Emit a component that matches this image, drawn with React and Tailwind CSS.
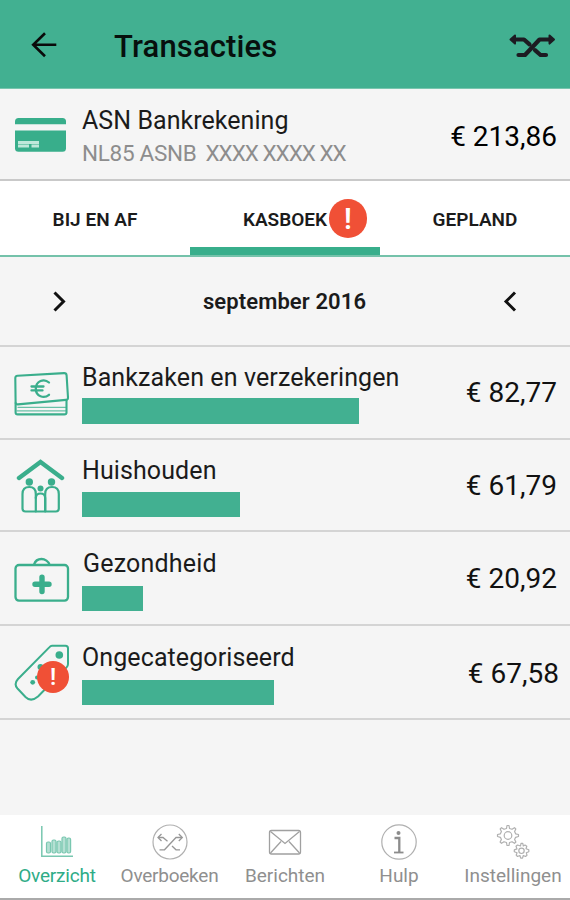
const GREEN = '#42b091';

function BackArrow() {
  return (
    <svg className="h-8 w-8" viewBox="28 28 32 32" fill="none" stroke="#0a0a0a" strokeWidth="2.6">
      <path d="M56.3 44.7H33M45 33.2L33.2 44.7L45 56.2" />
    </svg>
  );
}

function SwapIcon() {
  return (
    <svg className="h-8 w-12" viewBox="508 30 48 32" fill="none" stroke="#1d1b22" strokeWidth="4.2" strokeLinecap="round" strokeLinejoin="round">
      <path d="M514 39.5H524L529.5 44.3M535 50.2L540.5 55H546" />
      <path d="M518.5 55H525L539.5 39.5H550" />
      <path d="M515 35.4L510.5 39.5L515 43.6Z M549.5 35.4L554 39.5L549.5 43.6Z" fill="#1d1b22" strokeWidth="2" />
    </svg>
  );
}

function CardIcon() {
  return (
    <svg className="h-[34px] w-[52px]" viewBox="15 118 52 34" fill="#38ae8b">
      <path d="M15 124.3V121.5Q15 118 18.5 118H62.5Q66 118 66 121.5V124.3Z" />
      <path d="M15 130.5H66V148.3Q66 151.8 62.5 151.8H18.5Q15 151.8 15 148.3Z" />
      <path d="M18 142.5H39M18 146H29M31.5 146H39" stroke="#bfe8da" strokeWidth="2.8" />
    </svg>
  );
}

function BanknotesIcon() {
  return (
    <svg className="h-[46px] w-14" viewBox="14 371 56 46" fill="none" stroke="#3aae8c" strokeWidth="2.1" strokeLinejoin="round" strokeLinecap="round">
      <path d="M17.5 375.8L64 373.1Q66.4 373 66.6 375.4L68 397.5Q68.1 399.8 65.8 399.9L18 404.4Q15.7 404.6 15.6 402.3L15.3 378Q15.3 375.9 17.5 375.8Z" />
      <path d="M15.6 403V412.5Q15.6 414.4 17.7 414.4H64.3Q66.5 414.4 66.5 412.4V400.5" />
      <path d="M18 407.3H65.5M17 410.8H65.5" strokeWidth="1.2" opacity=".75" />
      <path d="M49 382.5C44 378 35.8 381 35.8 388.8C35.8 396.6 44 399 49 394.8M31.5 386.5H43.5M31.5 390.4H42.5" strokeWidth="2.3" />
    </svg>
  );
}

function HouseholdIcon() {
  return (
    <svg className="h-14 w-[50px]" viewBox="16 458 50 56" fill="none" stroke="#3aae8c" strokeLinejoin="round" strokeLinecap="round">
      <path d="M19 478L40.5 462L62 478" strokeWidth="4.4" strokeLinejoin="miter" />
      <g fill="#3aae8c" stroke="none">
        <circle cx="29.3" cy="482" r="3.7" />
        <circle cx="51.5" cy="482" r="3.7" />
        <circle cx="40.5" cy="488.5" r="3" />
      </g>
      <g strokeWidth="2.2">
        <path d="M35.8 511.5H25.5Q22.5 511.5 22.5 508.5V494Q22.5 487 29.3 487Q35.8 487 35.8 494Z" />
        <path d="M45.2 511.5H55.8Q58.8 511.5 58.8 508.5V494Q58.8 487 52 487Q45.2 487 45.2 494Z" />
        <path d="M35.8 498Q36 493.5 40.5 493.5Q45 493.5 45.2 498V511.5H35.8" />
      </g>
    </svg>
  );
}

function FirstAidIcon() {
  return (
    <svg className="h-[46px] w-14" viewBox="14 557 56 46" fill="none" stroke="#3aae8c" strokeWidth="2.3">
      <rect x="15.5" y="565" width="52.5" height="35.6" rx="3.5" />
      <path d="M34 564.5C35 561.5 38 559 41.5 559C45 559 48.5 561.5 49.5 564.5" />
      <path d="M42 577.3V591.5M35 584.3H49" strokeWidth="5.4" strokeLinecap="round" />
    </svg>
  );
}

function TagIcon() {
  return (
    <svg className="h-[58px] w-14" viewBox="14 644 56 58" fill="none" stroke="#3aae8c" strokeWidth="2" strokeLinejoin="round">
      <path d="M52 645.8H65.5Q68 645.8 68 648.3V664Q68 666 66.6 667.4L38 696.5Q31 702.5 25.5 697L17.5 688.5Q13.5 684 18 679L49.5 647.1Q50.6 645.9 52 645.8Z" />
      <g fill="#3aae8c" stroke="none">
        <circle cx="59.3" cy="655" r="3.8" />
        <circle cx="32.7" cy="682.3" r="2.4" />
        <circle cx="40.5" cy="667" r="3" />
        <circle cx="37" cy="677.5" r="2" />
      </g>
    </svg>
  );
}

function ChartIcon() {
  return (
    <svg className="h-9 w-9" viewBox="39 824 36 36" fill="none" stroke="#79c7b0" strokeWidth="1.5">
      <path d="M41.8 826V856.3H73" />
      <g fill="#b5e0d3" strokeWidth="1.2">
        <rect x="46.5" y="842" width="4" height="11" rx="1.5" />
        <rect x="52" y="840" width="4" height="13" rx="1.5" />
        <rect x="57" y="841" width="4" height="12" rx="1.5" />
        <rect x="62" y="837" width="4" height="16" rx="1.5" />
        <rect x="67" y="838" width="3.6" height="15" rx="1.5" />
      </g>
    </svg>
  );
}

function TransferIcon() {
  return (
    <svg className="h-9 w-9" viewBox="151.5 823.5 36 36" fill="none" stroke="#979797" strokeWidth="1.3">
      <circle cx="169.5" cy="841.5" r="17" stroke="#b0b0b0" strokeWidth="1.2" />
      <path d="M157.5 837H162.5L167 840.8M171.5 845.5L175.5 849.3H179.5" />
      <path d="M159 849.3H164L175.5 837H181.5" />
      <path d="M161 833.5L157.5 837L161 840.5M178.3 833.5L181.8 837L178.3 840.5" />
    </svg>
  );
}

function MailIcon() {
  return (
    <svg className="h-9 w-9" viewBox="267 824 36 36" fill="none" stroke="#a0a0a0" strokeWidth="1.3">
      <rect x="269.5" y="830.5" width="31" height="23.5" rx="2" />
      <path d="M270.5 831.5L285 843.5L299.5 831.5M270.5 853L281 841.5M299.5 853L289 841.5" />
    </svg>
  );
}

function InfoIcon() {
  return (
    <svg className="h-9 w-9" viewBox="381.5 823.5 36 36" fill="none" stroke="#8c8c8c">
      <circle cx="399.5" cy="841.5" r="17.2" stroke="#b0b0b0" strokeWidth="1.2" />
      <circle cx="399" cy="832.5" r="2" fill="#8c8c8c" stroke="none" />
      <path d="M395 837.5H399.8V851.5" strokeWidth="2.3" />
      <path d="M394.5 852H404" strokeWidth="1.8" />
    </svg>
  );
}

function GearsIcon() {
  return (
    <svg className="h-9 w-9" viewBox="495 824 36 36" fill="none" stroke="#b0b0b0" strokeWidth="1.2" strokeLinejoin="round">
      <path d="M506.5 828.5L507 825.5H509L509.5 828.5L512 829.3L514.5 827.7L515.8 829L514.6 831.5L515.6 833.8L518.5 834.5V836.5L515.6 837.3L514.6 839.5L515.9 842L514.5 843.3L512 841.7L509.5 842.5L509 845.5H507L506.5 842.5L504 841.7L501.5 843.3L500.1 842L501.4 839.5L500.4 837.3L497.5 836.5V834.5L500.4 833.8L501.4 831.5L500.2 829L501.5 827.7L504 829.3Z" />
      <circle cx="508" cy="835.5" r="3.8" />
      <path d="M520.5 846L521 843.3H522.8L523.3 846L525 845L526.8 846.2L526 848.7L528.8 849.8V851.8L526.3 852.7L527 855.3L525.5 856.5L523.3 855.5L522.5 858.2H520.7L519.9 855.5L517.5 856.5L516.2 855.2L517 852.7L514.3 851.8V849.9L517 848.9L516 846.3L517.5 845Z" />
      <circle cx="521.5" cy="850.8" r="2.7" />
    </svg>
  );
}

const rows = [
  { name: 'Bankzaken en verzekeringen', amount: '€ 82,77', Icon: BanknotesIcon, bar: 277, box: 'h-[93px]', iconPos: 'pt-[24px] pl-[14px]', textPos: 'pt-[15px]', barPos: 'mt-[4px] h-[26px]', right: 'pr-[13px] pt-[28px]' },
  { name: 'Huishouden', amount: '€ 61,79', Icon: HouseholdIcon, bar: 158, box: 'h-[92px]', iconPos: 'pt-[18px] pl-[16px]', textPos: 'pt-[15px]', barPos: 'mt-[5px] h-[25px]', right: 'pr-[13px] pt-[28px]' },
  { name: 'Gezondheid', amount: '€ 20,92', Icon: FirstAidIcon, bar: 61, box: 'h-[94px]', iconPos: 'pt-[25px] pl-[14px]', textPos: 'pt-[16px]', barPos: 'mt-[6px] h-[25px]', right: 'pr-[13px] pt-[29px]', shift: 'pl-px tracking-[0.200px]' },
  { name: 'Ongecategoriseerd', amount: '€ 67,58', Icon: TagIcon, bar: 192, box: 'h-[94px]', iconPos: 'pt-[18px] pl-[14px]', textPos: 'pt-[16px]', barPos: 'mt-[6px] h-[25px]', right: 'pr-[11px] pt-[30px]', alert: true },
];

const navItems = [
  { label: 'Overzicht', Icon: ChartIcon, width: 'w-[114px]', color: 'text-[#2fac87] tracking-[-0.200px]' },
  { label: 'Overboeken', Icon: TransferIcon, width: 'w-[111px]', color: 'text-[#8f8f8f] tracking-[-0.250px]' },
  { label: 'Berichten', Icon: MailIcon, width: 'w-[120px]', color: 'text-[#8f8f8f]' },
  { label: 'Hulp', Icon: InfoIcon, width: 'w-[108px]', color: 'text-[#8f8f8f]' },
  { label: 'Instellingen', Icon: GearsIcon, width: 'w-[120px]', color: 'text-[#8f8f8f]' },
];

export default function App() {
  return (
    <div className="flex h-[900px] w-[570px] flex-col overflow-hidden bg-[#f5f5f5] font-['Roboto',sans-serif] text-[#1b1b1b]">
      <header className="flex h-[89px] shrink-0 items-start border-b border-[#79c5ae] bg-[#42b091] pl-7">
        <div className="pt-7"><BackArrow /></div>
        <h1 className="mt-[29px] ml-[54px] text-[31px] leading-9 font-medium tracking-[0.150px] whitespace-nowrap text-[#07100d]">Transacties</h1>
        <div className="mt-[30px] mr-[14px] ml-auto"><SwapIcon /></div>
      </header>

      <section className="flex h-[92px] shrink-0 border-b-2 border-[#c9c9c9]">
        <div className="w-[82px] pt-[29px] pl-[15px]"><CardIcon /></div>
        <div className="pt-[16px] whitespace-nowrap">
          <div className="text-[25px] leading-8 tracking-[0.050px]">ASN Bankrekening</div>
          <div className="flex gap-[9px] text-[22.5px] leading-8 text-[#8d8d8d]">
            <span className="tracking-[-0.300px]">NL85 ASNB</span>
            <span className="tracking-[-1px]">XXXX XXXX XX</span>
          </div>
        </div>
        <div className="mr-[13px] ml-auto pt-[30px] text-[28px] leading-9 whitespace-nowrap text-black">€ 213,86</div>
      </section>

      <nav className="grid h-[76px] shrink-0 grid-cols-3 border-b-2 border-[#74c2aa] bg-white text-[19px] leading-[77px] font-semibold">
        <div className="text-center">BIJ EN AF</div>
        <div className="relative text-center">
          KASBOEK
          <span className="absolute top-[18px] left-[139px] flex h-[39px] w-[38px] items-center justify-center rounded-full bg-[#f05036] pt-px text-[29px] leading-none font-semibold text-white">!</span>
          <span className="absolute inset-x-0 top-[66px] h-[8px] bg-[#38ae8b]" />
        </div>
        <div className="text-center">GEPLAND</div>
      </nav>

      <div className="flex h-[90px] shrink-0 items-center justify-between border-b-2 border-[#d4d4d4] pr-[52px] pl-[51px]">
        <svg className="h-6 w-4" viewBox="0 0 16 24" fill="none" stroke="#111" strokeWidth="3"><path d="M3.5 3.5L12.5 12.5L3.5 21.5" /></svg>
        <div className="pt-[2px] text-[22px] leading-8 font-semibold tracking-[0.100px]">september 2016</div>
        <svg className="h-6 w-4" viewBox="0 0 16 24" fill="none" stroke="#111" strokeWidth="3"><path d="M13 3.5L4 12.5L13 21.5" /></svg>
      </div>

      <main>
        {rows.map(({ name, amount, Icon, bar, box, iconPos, textPos, barPos, right, alert, shift = 'tracking-[0.100px]' }) => (
          <div key={name} className={`flex border-b-2 border-[#d4d4d4] ${box}`}>
            <div className={`relative w-[82px] shrink-0 ${iconPos}`}>
              <Icon />
              {alert && <span className="absolute top-[35px] left-[37px] flex h-8 w-8 items-center justify-center rounded-full bg-[#f05036] pt-px text-[23px] leading-none font-semibold text-white">!</span>}
            </div>
            <div className={textPos}>
              <div className={`text-[25px] leading-8 whitespace-nowrap ${shift}`}>{name}</div>
              <div className={barPos} style={{ width: bar, backgroundColor: GREEN }} />
            </div>
            <div className={`ml-auto text-[28px] leading-9 whitespace-nowrap text-[#111] ${right}`}>{amount}</div>
          </div>
        ))}
      </main>

      <footer className="mt-auto flex h-[85px] shrink-0 border-b-2 border-[#aaa] bg-white">
        {navItems.map(({ label, Icon, width, color }) => (
          <div key={label} className={`flex shrink-0 flex-col items-center pt-[9px] ${width} ${color}`}>
            <Icon />
            <div className="mt-[2px] text-[19px] leading-7 whitespace-nowrap">{label}</div>
          </div>
        ))}
      </footer>
    </div>
  );
}
